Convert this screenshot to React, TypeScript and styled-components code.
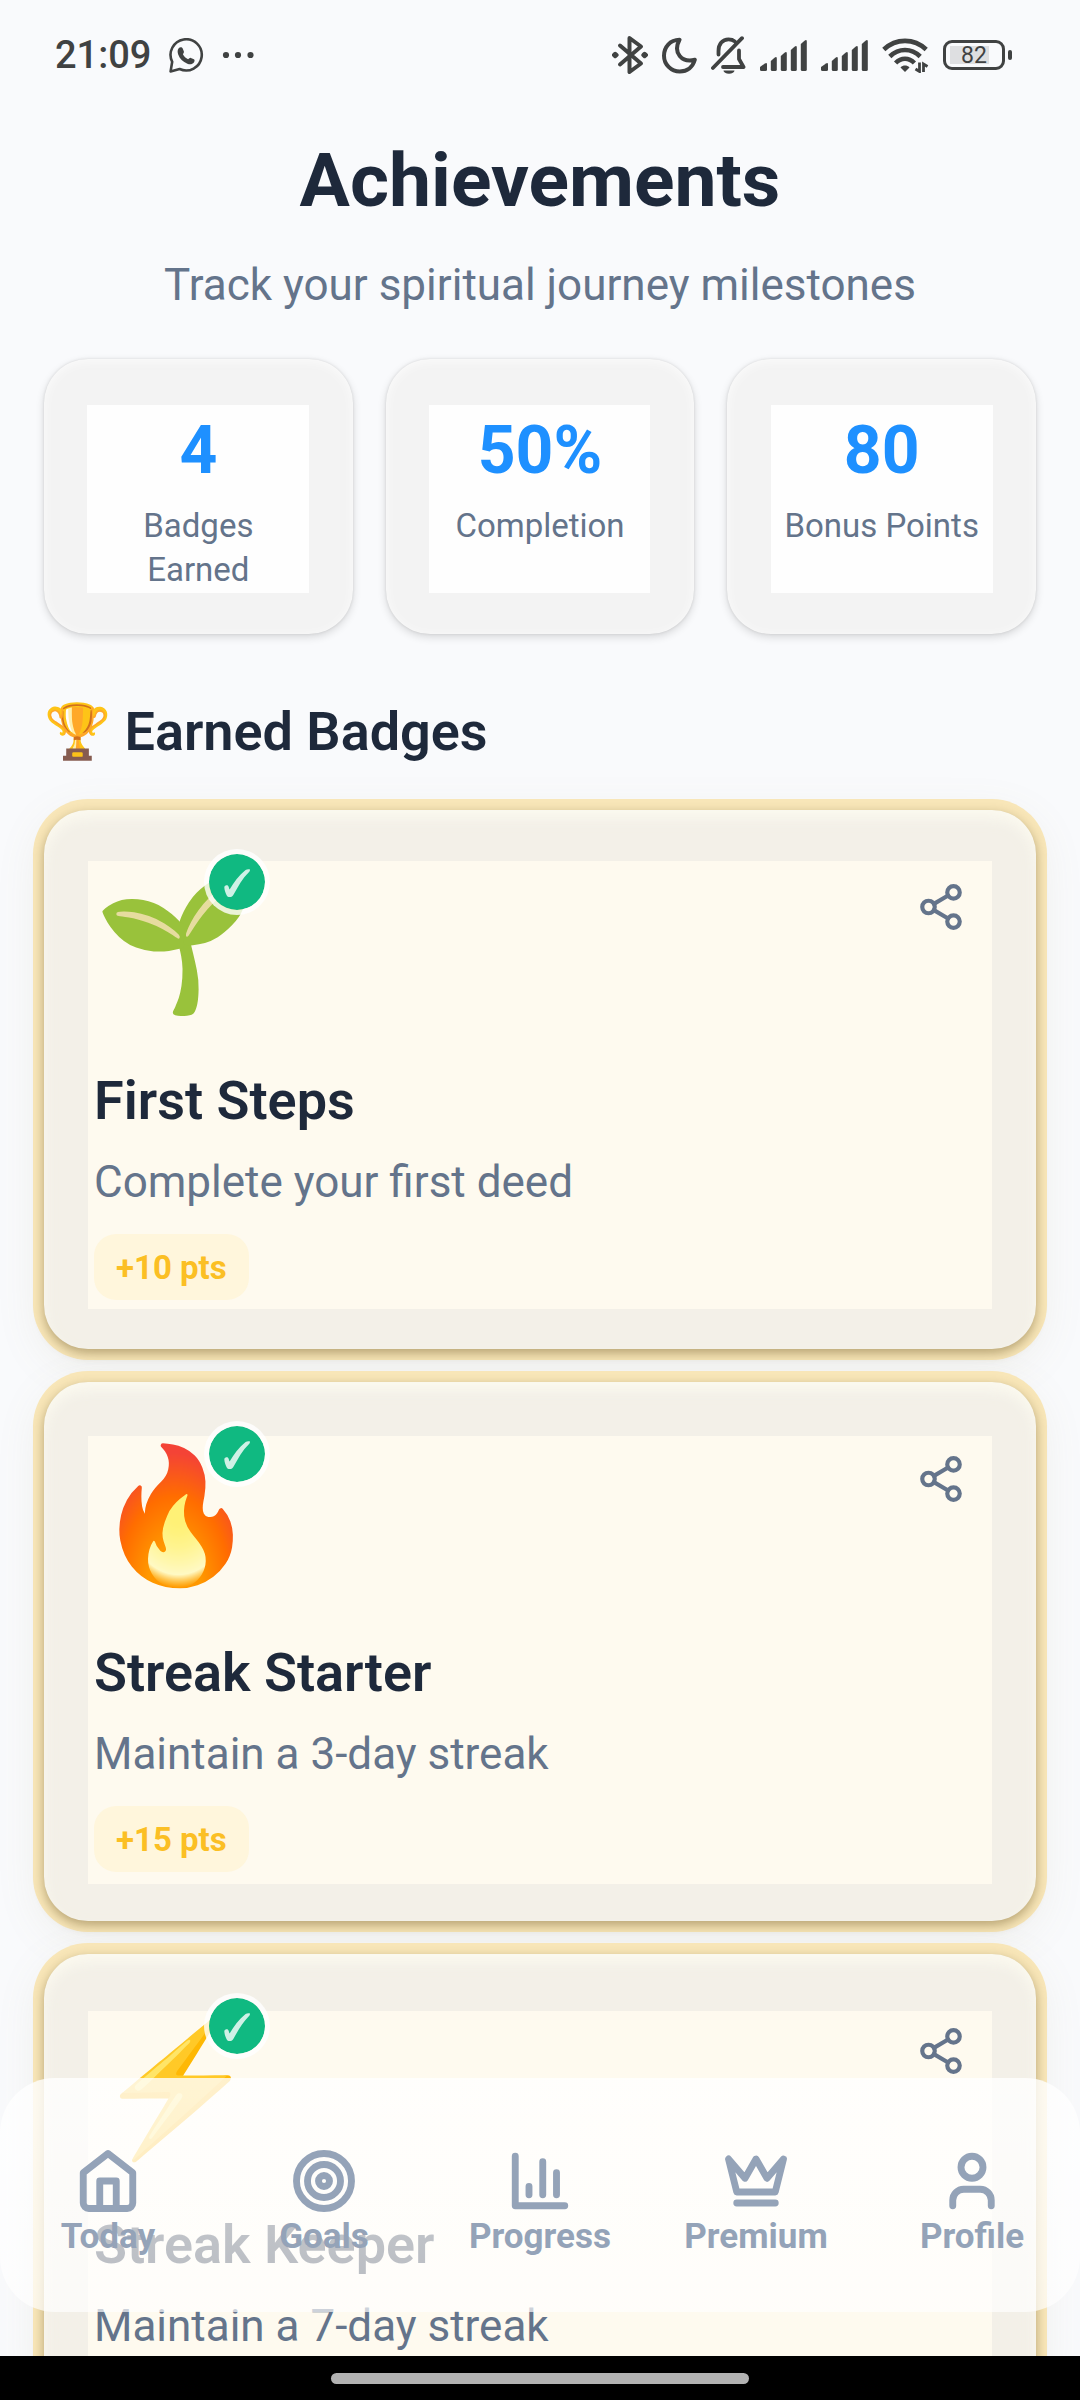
import React from "react";
import styled, { createGlobalStyle } from "styled-components";

const color = {
  ink: "#1e293b",
  muted: "#64748b",
  nav: "#94a3b8",
  system: "#404242",
  accent: "#1e90ff",
  gold: "#fbbf24",
  ring: "#f8e6b8",
  success: "#10b981",
  page: "#f9fafc",
};

const GlobalStyle = createGlobalStyle`
  *, *::before, *::after { box-sizing: border-box; }
  body {
    margin: 0;
    background: ${color.page};
    color: ${color.ink};
    font-family: Roboto, "Noto Sans", sans-serif;
  }
  h1, h2, h3, p, dl, dt, dd, ul { margin: 0; padding: 0; }
  ul { list-style: none; }
`;

const Screen = styled.div`
  position: relative;
  display: flex;
  flex-direction: column;
  height: 100vh;
  overflow: hidden;
`;

/* System status bar */

const StatusBar = styled.div`
  flex: none;
  display: flex;
  align-items: center;
  justify-content: space-between;
  height: 110px;
  padding: 0 68px 0 55px;
  color: ${color.system};
`;

const StatusGroup = styled.div<{ $gap: number }>`
  display: flex;
  align-items: center;
  gap: ${(p) => p.$gap}px;

  svg { display: block; }
`;

const Clock = styled.time`
  font-size: 38px;
  font-weight: 500;
  line-height: 44px;
`;

const Battery = styled.div`
  display: flex;
  align-items: center;
  gap: 3px;

  &::after {
    content: "";
    width: 4px;
    height: 10px;
    border-radius: 2px;
    background: ${color.system};
  }
`;

const BatteryCell = styled.div<{ $level: number }>`
  width: 62px;
  height: 30px;
  border: 3px solid ${color.system};
  border-radius: 9px;
  padding: 4px 4px 2px;
  background: linear-gradient(#dedfe1, #dedfe1) 4px center / ${(p) => (p.$level * 48) / 100}px 18px no-repeat;
  font-size: 23px;
  line-height: 18px;
  text-align: center;
`;

/* Page */

const Main = styled.main`
  flex: 1;
  min-height: 0;
  overflow-y: auto;
  scrollbar-width: none;
  padding: 24px 44px 0;
`;

const Header = styled.header`
  text-align: center;
`;

const Title = styled.h1`
  font-size: 75px;
  font-weight: 700;
  line-height: 92px;
`;

const Subtitle = styled.p`
  margin-top: 29px;
  color: ${color.muted};
  font-size: 44px;
  line-height: 60px;
`;

const Stats = styled.dl`
  display: grid;
  grid-template-columns: repeat(3, 1fr);
  gap: 33px;
  margin-top: 44px;
`;

const StatCard = styled.div`
  display: flex;
  flex-direction: column-reverse;
  justify-content: flex-end;
  gap: 15px;
  min-height: 275px;
  padding: 53px 48px 42px;
  border-radius: 44px;
  background: linear-gradient(#fefefe, #fefefe) center 46px / calc(100% - 87px) 188px no-repeat, #f3f3f3;
  box-shadow: inset 0 2px 12px rgba(255, 255, 255, 0.7), 0 3px 8px rgba(0, 0, 0, 0.14), 0 0 3px rgba(0, 0, 0, 0.1);
  text-align: center;
`;

const StatValue = styled.dd`
  color: ${color.accent};
  font-size: 66px;
  font-weight: 700;
  line-height: 77px;
`;

const StatLabel = styled.dt`
  color: ${color.muted};
  font-size: 33px;
  line-height: 44px;
`;

const SectionTitle = styled.h2`
  margin-top: 65px;
  font-size: 54px;
  font-weight: 600;
  line-height: 66px;
`;

const BadgeList = styled.ul`
  display: flex;
  flex-direction: column;
  gap: 33px;
  margin-top: 45px;
`;

const BadgeCard = styled.li<{ $shade: number }>`
  padding: 50px 48px 49px 50px;
  border-radius: 44px;
  background: linear-gradient(#fefaef, #fefaef) center ${(p) => p.$shade}px / calc(100% - 88px) 448px no-repeat, #f3f0e8;
  box-shadow: inset 0 8px 14px rgba(255, 253, 242, 0.7), 0 4px 11px rgba(90, 70, 20, 0.42),
    0 0 0 11px ${color.ring}, 0 11px 44px 6px rgba(150, 140, 90, 0.1);
`;

const BadgeTop = styled.div`
  display: flex;
  align-items: flex-start;
  justify-content: space-between;
`;

const BadgeEmoji = styled.span`
  position: relative;
  font-size: 132px;
  line-height: 168px;
`;

const EarnedMark = styled.span`
  position: absolute;
  top: -11px;
  right: -12px;
  display: grid;
  place-items: center;
  width: 66px;
  height: 66px;
  border: 5px solid rgba(255, 255, 255, 0.8);
  border-radius: 50%;
  background: ${color.success};
  background-clip: padding-box;
`;

const ShareButton = styled.button`
  display: grid;
  padding: 22px;
  border: 0;
  background: none;
  color: ${color.muted};
  cursor: pointer;
`;

const BadgeName = styled.h3`
  margin-top: 40px;
  font-size: 54px;
  font-weight: 600;
  line-height: 66px;
`;

const BadgeText = styled.p`
  margin-top: 17px;
  color: ${color.muted};
  font-size: 44px;
  line-height: 62px;
`;

const Points = styled.p`
  width: fit-content;
  margin-top: 21px;
  padding: 12px 22px 10px;
  border-radius: 22px;
  background: #fff6dc;
  color: ${color.gold};
  font-size: 33px;
  font-weight: 700;
  line-height: 44px;
`;

/* Floating tab bar */

const TabBar = styled.nav`
  position: absolute;
  right: 0;
  bottom: 88px;
  left: 0;
  display: grid;
  grid-template-columns: repeat(5, 1fr);
  padding: 70px 0 52px;
  border-radius: 55px;
  background: linear-gradient(rgba(255, 255, 255, 0.8), rgba(255, 255, 255, 0.68));
`;

const Tab = styled.a`
  display: flex;
  flex-direction: column;
  align-items: center;
  color: ${color.nav};
  font-size: 35px;
  font-weight: 700;
  line-height: 46px;
  text-decoration: none;
`;

const GestureBar = styled.footer`
  flex: none;
  display: grid;
  place-items: center;
  height: 44px;
  background: #000;

  &::before {
    content: "";
    width: 418px;
    height: 11px;
    border-radius: 6px;
    background: #b2b2b2;
  }
`;

/* Icons */

const WhatsAppIcon = () => (
  <svg width="35" height="35" viewBox="0 0 35 35" fill="none" aria-hidden="true">
    <path d="M1.6 33.4l1.6-9.6A15.6 15.6 0 1 1 10.6 31z" stroke="currentColor" strokeWidth="2.6" strokeLinejoin="round" />
    <path
      d="M9.5 10.5c1.5-2 3.5-1.5 4.2 0l1.2 3c.4 1-.8 2-1 2.8 1 2.2 3 4 5.2 4.9.9-.2 1.8-1.6 2.8-1.3l3 1.4c1 .5.8 2.2 0 3.2-1.6 2-4 2.2-6.5 1.2-4.5-1.8-7.8-5-9.2-9.2-.8-2.3-.8-4.3.3-6z"
      fill="currentColor"
    />
  </svg>
);

const MoreIcon = () => (
  <svg width="32" height="8" viewBox="0 0 32 8" fill="currentColor" aria-hidden="true">
    <circle cx="4" cy="4" r="3.1" />
    <circle cx="16" cy="4" r="3.1" />
    <circle cx="28.5" cy="4" r="3.1" />
  </svg>
);

const BluetoothIcon = () => (
  <svg width="36" height="40" viewBox="0 0 36 40" fill="none" stroke="currentColor" strokeWidth="4" strokeLinecap="round" strokeLinejoin="round" aria-hidden="true">
    <path d="M8 10.5l21 18L17.5 37V3L29 11.5l-21 18" />
    <path d="M3.2 18.8L4.6 20l-1.4 1.2L1.9 20zM32.6 18.8L34 20l-1.4 1.2-1.3-1.2z" />
  </svg>
);

const MoonIcon = () => (
  <svg width="35" height="37" viewBox="0 0 35 37" fill="none" stroke="currentColor" strokeWidth="4" strokeLinejoin="round" aria-hidden="true">
    <path d="M17.5 2.8C8 3 2 10 2 18.7a15.8 15.8 0 0 0 15.8 15.8c7.5 0 13-4.5 15-11.7C20 26 10.5 16 17.5 2.8z" />
  </svg>
);

const BellOffIcon = () => (
  <svg width="35" height="38" viewBox="0 0 35 38" fill="none" stroke="currentColor" strokeWidth="3.8" strokeLinecap="round" strokeLinejoin="round" aria-hidden="true">
    <path d="M1.9 32L31 2.2M7.5 18.5V15c0-7 4-11.7 10-11.7 2.5 0 4.5.5 6.2 2" />
    <path d="M28 14.5v8.5l4.5 8H12" />
    <path d="M12.5 34.5h11a5.5 3.2 0 0 1-11 0z" fill="currentColor" stroke="none" />
  </svg>
);

const SignalIcon = () => (
  <svg width="47" height="31" viewBox="0 0 47 31" fill="currentColor" aria-hidden="true">
    {[8, 14, 19, 25, 31].map((h, i) => {
      const x = i === 0 ? 0 : 0.8 + i * 10;
      const w = i === 0 ? 7 : 6;
      return <path key={h} d={`M${x} ${31 - h + 4}l${w - 2}-3.6q2-1 2 1V29.5q0 1.5-1.5 1.5h${3 - w}q-1.5 0-1.5-1.5z`} />;
    })}
  </svg>
);

const WifiIcon = () => (
  <svg width="47" height="36" viewBox="0 0 47 36" fill="none" stroke="currentColor" strokeWidth="4.6" aria-hidden="true">
    <path d="M1.8 12.5C14 1 32 1 44.2 12.5M7.8 19.5c9-8.6 21.4-8.6 30.4 0M13.6 26c5.5-5.6 13.3-5.6 18.8 0" />
    <path d="M18.5 30.5c2.5-2.6 6.5-2.6 9 0L23 35z" fill="currentColor" stroke="none" />
    <path d="M37.5 25.5v9l-4-2.5M41.5 35v-8l4 2.5" strokeWidth="2.8" />
  </svg>
);

const CheckIcon = () => (
  <svg width="28" height="30" viewBox="-14 -14 28 30" fill="#fff" fillOpacity="0.8" aria-hidden="true">
    <path d="M-12.7 6C-12.3 4.6-10.6 3.9-9.2 4.4-8.2 5-8.1 7.2-7.4 8.6-3.2 1.4 2-5.6 8.6-11c1.4-.9 3-.8 4.4-.6C13-10.2 12.4-9.4 11.6-8.6 5.4-2.6 1 5.6-3.4 13.6-4.4 15.4-5.6 16.2-7.2 16-8.8 16-9.8 15.6-10.4 14.2-11.6 11.6-12.6 9-12.7 6z" />
  </svg>
);

const StrokeIcon = ({ size, weight, children }: { size: number; weight: number; children: React.ReactNode }) => (
  <svg width={size} height={size} viewBox="0 0 24 24" fill="none" stroke="currentColor" strokeWidth={weight} strokeLinecap="round" strokeLinejoin="round" aria-hidden="true">
    {children}
  </svg>
);

const ShareIcon = () => (
  <StrokeIcon size={50} weight={2}>
    <circle cx="18" cy="5" r="3" />
    <circle cx="6" cy="12" r="3" />
    <circle cx="18" cy="19" r="3" />
    <path d="M8.59 13.51l6.83 3.98M15.41 6.51l-6.82 3.98" />
  </StrokeIcon>
);

const stats = [
  { label: "Badges Earned", value: "4" },
  { label: "Completion", value: "50%" },
  { label: "Bonus Points", value: "80" },
];

const badges = [
  { emoji: "🌱", name: "First Steps", text: "Complete your first deed", points: 10 },
  { emoji: "🔥", name: "Streak Starter", text: "Maintain a 3-day streak", points: 15 },
  { emoji: "⚡", name: "Streak Keeper", text: "Maintain a 7-day streak", points: 0 },
];

const tabs = [
  {
    label: "Today",
    icon: (
      <>
        <path d="M3 9l9-7 9 7v11a2 2 0 0 1-2 2H5a2 2 0 0 1-2-2z" />
        <path d="M9 22V12h6v10" />
      </>
    ),
  },
  {
    label: "Goals",
    icon: (
      <>
        <circle cx="12" cy="12" r="10" />
        <circle cx="12" cy="12" r="6" />
        <circle cx="12" cy="12" r="2" />
      </>
    ),
  },
  { label: "Progress", icon: <path d="M3 3v18h18M18 17V9M13 17V5M8 17v-3" /> },
  { label: "Premium", icon: <path d="M2 4l3 12h14l3-12-6 7-4-7-4 7-6-7zM5 20h14" /> },
  {
    label: "Profile",
    icon: (
      <>
        <path d="M19 21v-2a4 4 0 0 0-4-4H9a4 4 0 0 0-4 4v2" />
        <circle cx="12" cy="7" r="4" />
      </>
    ),
  },
];

export default function App() {
  return (
    <Screen>
      <GlobalStyle />
      <StatusBar>
        <StatusGroup $gap={18}>
          <Clock>21:09</Clock>
          <WhatsAppIcon />
          <MoreIcon />
        </StatusGroup>
        <StatusGroup $gap={14}>
          <BluetoothIcon />
          <MoonIcon />
          <BellOffIcon />
          <SignalIcon />
          <SignalIcon />
          <WifiIcon />
          <Battery>
            <BatteryCell $level={82}>82</BatteryCell>
          </Battery>
        </StatusGroup>
      </StatusBar>

      <Main>
        <Header>
          <Title>Achievements</Title>
          <Subtitle>Track your spiritual journey milestones</Subtitle>
        </Header>

        <Stats>
          {stats.map((s) => (
            <StatCard key={s.label}>
              <StatLabel>{s.label}</StatLabel>
              <StatValue>{s.value}</StatValue>
            </StatCard>
          ))}
        </Stats>

        <SectionTitle>🏆 Earned Badges</SectionTitle>
        <BadgeList>
          {badges.map((b, i) => (
            <BadgeCard key={b.name} $shade={51 + i * 3}>
              <BadgeTop>
                <BadgeEmoji>
                  {b.emoji}
                  <EarnedMark>
                    <CheckIcon />
                  </EarnedMark>
                </BadgeEmoji>
                <ShareButton type="button" aria-label={`Share ${b.name}`}>
                  <ShareIcon />
                </ShareButton>
              </BadgeTop>
              <BadgeName>{b.name}</BadgeName>
              <BadgeText>{b.text}</BadgeText>
              {b.points > 0 && <Points>+{b.points} pts</Points>}
            </BadgeCard>
          ))}
        </BadgeList>
      </Main>

      <TabBar aria-label="Main">
        {tabs.map((t) => (
          <Tab key={t.label} href={`#${t.label.toLowerCase()}`}>
            <StrokeIcon size={66} weight={2.5}>
              {t.icon}
            </StrokeIcon>
            {t.label}
          </Tab>
        ))}
      </TabBar>
      <GestureBar />
    </Screen>
  );
}
